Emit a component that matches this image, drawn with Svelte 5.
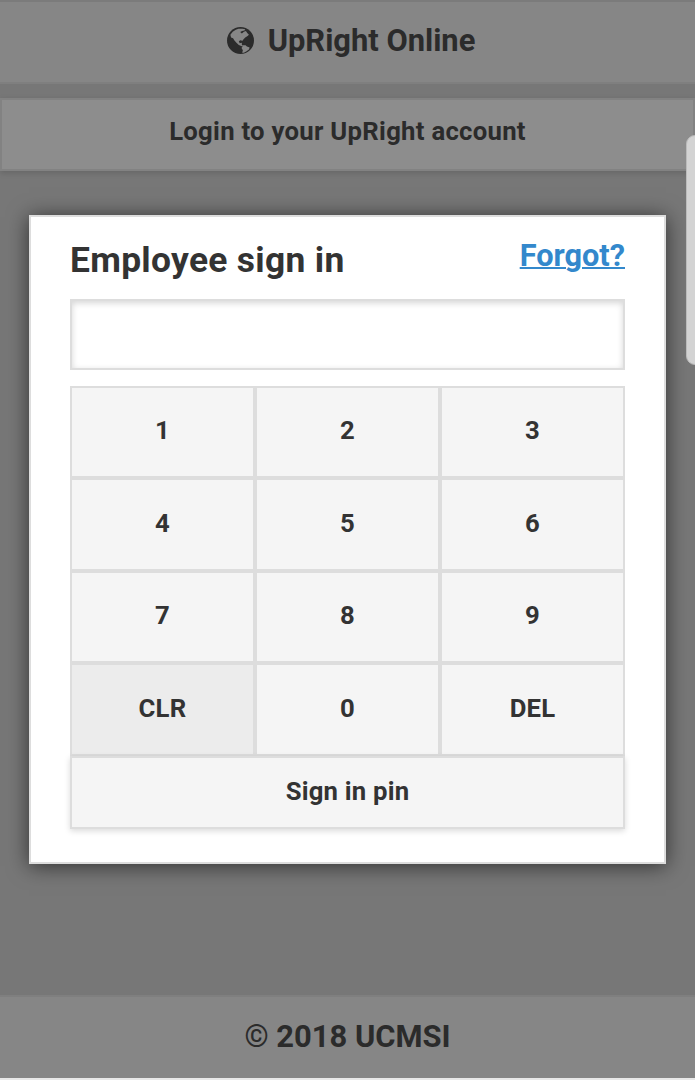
<script>
  const keys = ['1', '2', '3', '4', '5', '6', '7', '8', '9', 'CLR', '0', 'DEL'];
</script>

<div class="page">
  <header>
    <svg class="globe" viewBox="0 0 80 80" aria-hidden="true">
      <circle cx="40" cy="40" r="40" fill="#2b2b2b" />
      <path fill="#868686" d="M10 23 17 14 26 8 34 5 46 5 54 7 52 10 45 12 39 15 44 19 50 14 56 12 60 18 65 23 61 27 54 31 49 36 46 41 39 39 35 43 38 48 44 47 44 53 50 56 44 57 35 53 28 47 22 40 18 33 12 31Z" />
      <path fill="#868686" d="M48 54 55 54 59 58 67 61 65 67 58 72 50 76 45 76 47 69 43 62Z" />
    </svg>
    <h1>UpRight Online</h1>
  </header>

  <main>
    <button class="login">Login to your UpRight account</button>

    <section class="popup">
      <div class="heading">
        <h2>Employee sign in</h2>
        <a href="#forgot">Forgot?</a>
      </div>
      <input type="password" aria-label="PIN" />
      <div class="keypad">
        {#each keys as key}
          <button class:active={key === 'CLR'}>{key}</button>
        {/each}
      </div>
      <button class="submit">Sign in pin</button>
    </section>
  </main>

  <footer>© 2018 UCMSI</footer>
  <div class="scrollbar"></div>
</div>

<style>
  :global(body) {
    margin: 0;
    background: #e8e8e8;
  }
  .page, .page * {
    box-sizing: border-box;
  }
  .page {
    position: relative;
    display: flex;
    flex-direction: column;
    height: 1080px;
    overflow: hidden;
    border-bottom: 2px solid #e8e8e8;
    background: #777;
    font-family: Roboto, sans-serif;
    font-weight: 700;
    color: #333;
  }
  header, footer {
    display: flex;
    align-items: center;
    justify-content: center;
    flex: none;
    background: #868686;
    color: #2b2b2b;
    font-size: 30.9px;
  }
  header {
    height: 84px;
    padding: 0 0 3px 7px;
    gap: 14px;
    border-top: 2px solid #7b7b7b;
    border-bottom: 2px solid #7f7f7f;
  }
  footer {
    height: 83px;
    padding-bottom: 2px;
    border-top: 2px solid #7f7f7f;
  }
  h1, h2 {
    margin: 0;
    font-size: inherit;
    font-weight: 700;
  }
  .globe {
    width: 27px;
    height: 27px;
  }
  main {
    flex: 1;
    display: flex;
    flex-direction: column;
    padding-top: 14px;
  }
  button {
    font: 700 25.7px Roboto, sans-serif;
    letter-spacing: 0.2px;
    color: #333;
    padding: 0;
    margin: 0;
    border-radius: 0;
  }
  .login {
    height: 73px;
    padding-bottom: 8px;
    border: 2px solid #828282;
    background: #8d8d8d;
    color: #2b2b2b;
    letter-spacing: 0.28px;
    box-shadow: 0 2px 6px rgba(0, 0, 0, 0.15);
  }
  .popup {
    display: flex;
    flex-direction: column;
    height: 649px;
    margin: 44px 29px 0;
    padding: 0 39px;
    border: 2px solid #ddd;
    background: #fff;
    box-shadow: 0 2px 20px rgba(0, 0, 0, 0.6);
  }
  .heading {
    display: flex;
    justify-content: space-between;
    height: 82px;
    padding-top: 21px;
  }
  h2 {
    padding-top: 1px;
    font-size: 35.4px;
    line-height: 42px;
    letter-spacing: 0.3px;
  }
  a {
    color: #38c;
    font-size: 30.7px;
    line-height: 36px;
    text-decoration-thickness: 2px;
  }
  input {
    width: 100%;
    height: 71px;
    border: 2px solid #ddd;
    border-radius: 0;
    background: #fff;
    box-shadow: inset 0 2px 6px rgba(0, 0, 0, 0.17);
    outline: none;
  }
  .keypad {
    display: grid;
    grid-template-columns: repeat(3, 1fr);
    grid-template-rows: repeat(4, 1fr);
    height: 370.5px;
    margin-top: 15.5px;
  }
  .keypad button {
    padding-bottom: 3.5px;
    border: 2px solid #ddd;
    background: #f5f5f5;
  }
  .keypad .active {
    background: #ececec;
  }
  .submit {
    height: 73px;
    padding-bottom: 4px;
    border: 2px solid #ddd;
    background: #f5f5f5;
    box-shadow: 0 2px 6px rgba(0, 0, 0, 0.15);
  }
  .scrollbar {
    position: absolute;
    top: 135px;
    right: -12px;
    width: 21px;
    height: 230px;
    border: 1px solid #bbb;
    border-radius: 9px;
    background: #d3d3d3;
  }
</style>
